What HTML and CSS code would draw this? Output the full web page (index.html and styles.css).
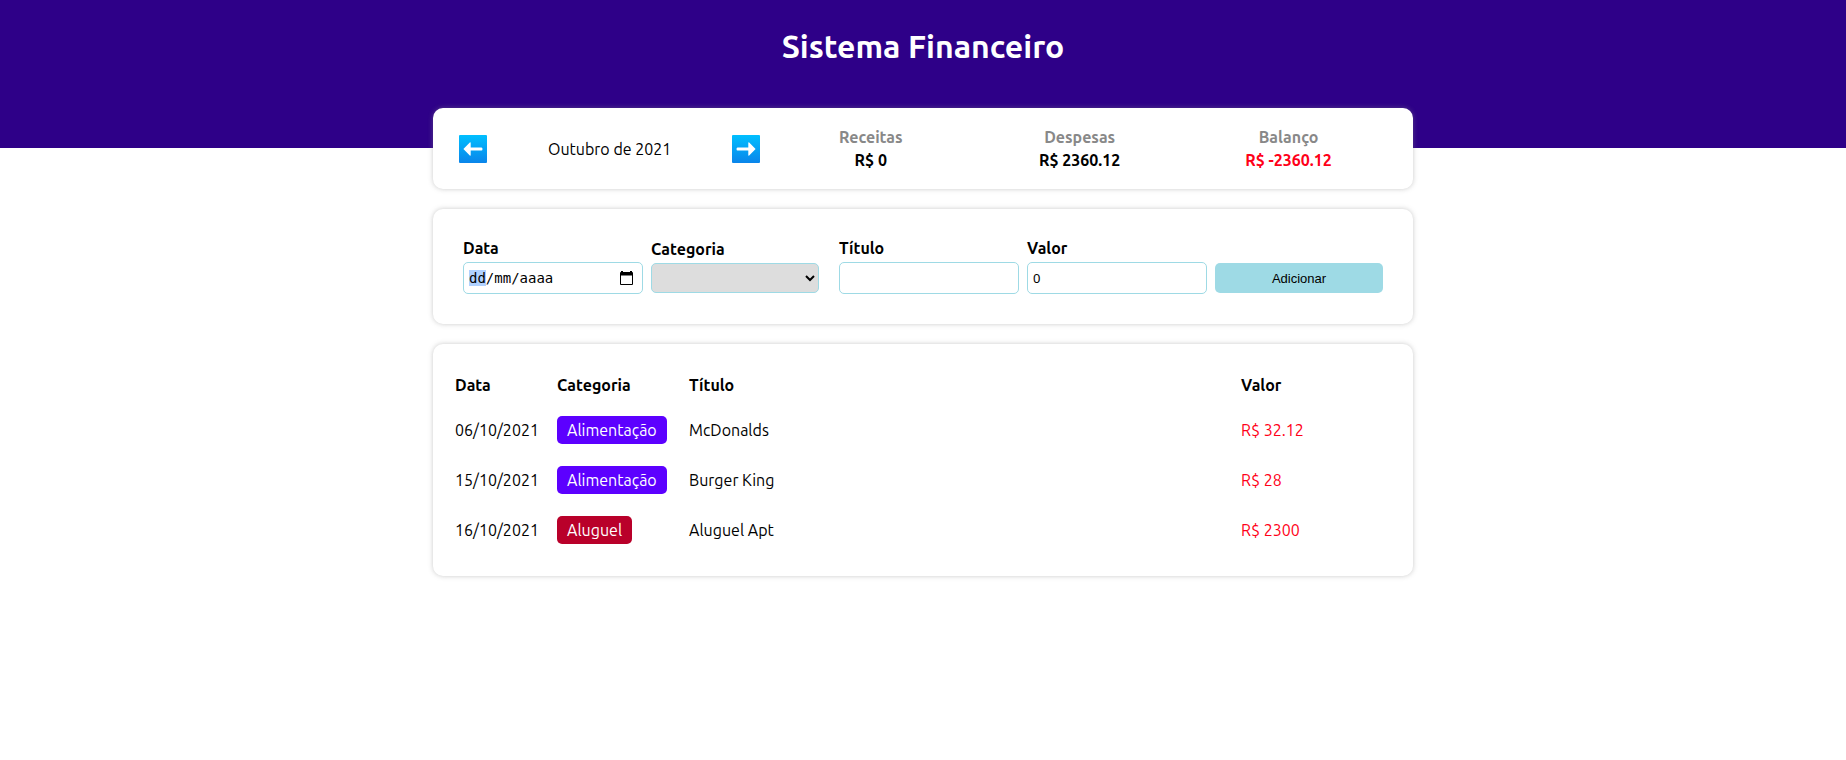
FILE: index.html
```html
<!DOCTYPE html>
<html lang="pt-BR">
<head>
<meta charset="utf-8">
<meta name="viewport" content="width=device-width, initial-scale=1">
<title>Sistema Financeiro</title>
<link rel="stylesheet" href="styles.css">
</head>
<body>
<header class="header"><h1 class="header-title">Sistema Financeiro</h1></header>
<main class="container">
  <section class="card info">
    <div class="months">
      <button class="arrow" type="button" aria-label="Mês anterior">
        <svg viewBox="0 0 28 28" width="28" height="28" aria-hidden="true">
          <defs><linearGradient id="sky" x1="0" y1="0" x2="0" y2="1"><stop offset="0" stop-color="#00bfff"/><stop offset="1" stop-color="#0a85ea"/></linearGradient></defs>
          <rect width="28" height="28" rx="1" fill="url(#sky)"/>
          <path d="M4.400 14 L10.800 7.400 Q11.700 6.800 11.700 8 V12.400 H22.500 Q23.500 12.400 23.500 14 T22.500 15.600 H11.700 V20 Q11.700 21.200 10.800 20.600 Z" fill="#fff"/>
        </svg>
      </button>
      <span class="month">Outubro de 2021</span>
      <button class="arrow" type="button" aria-label="Próximo mês">
        <svg viewBox="0 0 28 28" width="28" height="28" aria-hidden="true">
          <rect width="28" height="28" rx="1" fill="url(#sky)"/>
          <path transform="translate(28 0) scale(-1 1)" d="M4.400 14 L10.800 7.400 Q11.700 6.800 11.700 8 V12.400 H22.500 Q23.500 12.400 23.500 14 T22.500 15.600 H11.700 V20 Q11.700 21.200 10.800 20.600 Z" fill="#fff"/>
        </svg>
      </button>
    </div>
    <div class="totals">
      <div class="total"><div class="total-title">Receitas</div><div>R$ 0</div></div>
      <div class="total"><div class="total-title">Despesas</div><div>R$ 2360.12</div></div>
      <div class="total"><div class="total-title">Balanço</div><div class="negative">R$ -2360.12</div></div>
    </div>
  </section>

  <form class="card form">
    <div class="field">
      <label for="date">Data</label>
      <div class="date-box">
        <input class="input date" id="date" type="text" value="dd/mm/aaaa" autocomplete="off" autofocus>
        <svg class="calendar" viewBox="0 0 13 14" width="13" height="14" aria-hidden="true"><path d="M1 0h2v1h7V0h2v1q1 0 1 1v11q0 1-1 1H1q-1 0-1-1V2q0-1 1-1zM1 4.500v8.500h11V4.500z" fill="#000" fill-rule="evenodd"/></svg>
      </div>
    </div>
    <div class="field">
      <label for="category">Categoria</label>
      <select class="select" id="category"><option></option><option>Alimentação</option><option>Aluguel</option></select>
    </div>
    <div class="field">
      <label for="title">Título</label>
      <input class="input" id="title" type="text">
    </div>
    <div class="field">
      <label for="value">Valor</label>
      <input class="input" id="value" type="text" inputmode="decimal" value="0">
    </div>
    <div class="field action"><button class="submit" type="button">Adicionar</button></div>
  </form>

  <section class="card">
    <table class="table">
      <thead><tr><th class="col-date">Data</th><th class="col-category">Categoria</th><th>Título</th><th class="col-value">Valor</th></tr></thead>
      <tbody>
        <tr><td>06/10/2021</td><td><span class="badge food">Alimentação</span></td><td>McDonalds</td><td class="negative">R$ 32.12</td></tr>
        <tr><td>15/10/2021</td><td><span class="badge food">Alimentação</span></td><td>Burger King</td><td class="negative">R$ 28</td></tr>
        <tr><td>16/10/2021</td><td><span class="badge rent">Aluguel</span></td><td>Aluguel Apt</td><td class="negative">R$ 2300</td></tr>
      </tbody>
    </table>
  </section>
</main>
<script src="script.js"></script>
</body>
</html>
```

FILE: styles.css
```css
* { box-sizing: border-box; }
body {
  margin: 0;
  background: #fff;
  color: #000;
  font: 16px/18px Ubuntu, "Noto Sans", sans-serif;
}
.header {
  height: 148px;
  padding-top: 28px;
  background: #2e0088;
  color: #fff;
  text-align: center;
}
.header-title { margin: 0; font-size: 32px; line-height: 37px; }
.container {
  max-width: 980px;
  margin: -40px auto 50px;
  display: flex;
  flex-direction: column;
  gap: 20px;
}
.card {
  padding: 20px;
  border-radius: 10px;
  background: #fff;
  box-shadow: 0 0 5px rgba(136, 136, 136, 0.45);
}
.info { display: flex; align-items: center; }
.months { flex: 1; display: flex; align-items: center; }
.arrow {
  width: 40px;
  padding: 0;
  border: 0;
  background: none;
  display: flex;
  justify-content: center;
}
.month { flex: 1; text-align: center; }
.totals { flex: 2; display: flex; }
.total { flex: 1; text-align: center; font-weight: bold; }
.total-title { margin-bottom: 5px; color: #888; }
.negative { color: #ff0018; }
.form { display: flex; align-items: center; }
.field { flex: 1; min-width: 0; margin: 10px; }
.form label { display: block; margin-bottom: 5px; font-weight: bold; }
.input {
  box-sizing: content-box;
  display: block;
  width: 100%;
  height: 30px;
  padding: 0 5px;
  border: 1px solid #9edae5;
  border-radius: 5px;
  outline: none;
  background: #fff;
  color: #000;
  font: 13px "Noto Sans", sans-serif;
}
.date-box { position: relative; }
.date { font: 14px "DejaVu Sans Mono", monospace; }
.date::selection { background: #b0d1ff; color: #000; }
.calendar { position: absolute; right: -2px; top: 9px; }
.select {
  display: block;
  width: 100%;
  height: 30px;
  border: 1px solid #9edae5;
  border-radius: 5px;
  background: #ddd;
}
.action { padding-top: 23px; }
.submit {
  display: block;
  width: 100%;
  height: 30px;
  border: 0;
  border-radius: 5px;
  background: #9edae5;
  color: #000;
  font: 13px "Liberation Sans", sans-serif;
}
.table {
  width: 100%;
  margin-bottom: 1px;
  table-layout: fixed;
  border-collapse: collapse;
}
.table th { height: 41px; padding: 0 2px; text-align: left; }
.table td { height: 50px; padding: 0 2px; }
.col-date { width: 102px; }
.col-category { width: 132px; }
.col-value { width: 154px; }
.badge {
  display: inline-block;
  padding: 5px 10px;
  border-radius: 5px;
  color: #fff;
}
.food { background: #5c00ff; }
.rent { background: #b9002a; }
```

FILE: script.js
```js
const date = document.getElementById('date');
date.focus();
date.setSelectionRange(0, 2);
```
